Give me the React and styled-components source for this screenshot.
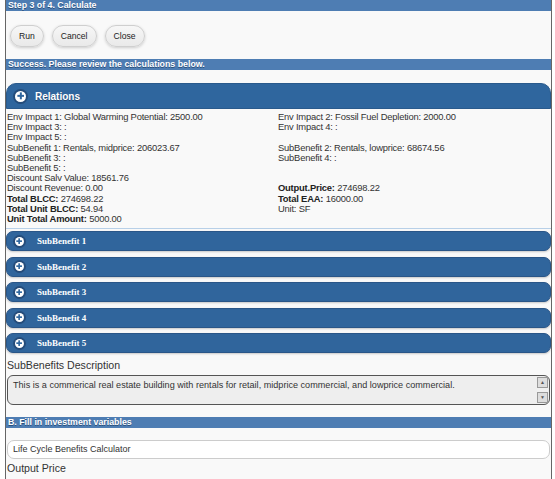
import React from "react";
import styled, { createGlobalStyle } from "styled-components";

const Global = createGlobalStyle`
  *, *::before, *::after { box-sizing: border-box; }
  html, body { margin: 0; padding: 0; background: #fff; }
  body { font-family: "Liberation Sans", Arial, sans-serif; }
`;

const Page = styled.div`
  margin-left: 5px;
  width: 547px;
  height: 479px;
  overflow: hidden;
  border-left: 1px solid #666;
  border-right: 1px solid #666;
  background: #f9f9f9;
  color: #333;
`;

const Bar = styled.div`
  height: 11px;
  line-height: 11px;
  background: #4e7db3;
  color: #fff;
  font-weight: bold;
  font-size: 8.8px;
  padding-left: 2px;
  text-shadow: 0 1px 0 #2a4f7a;
  margin-top: ${p => p.$mt || 0}px;
  white-space: nowrap;
`;

const ButtonRow = styled.div`
  display: flex;
  gap: 8px;
  padding: 14px 0 0 4px;
`;

const Btn = styled.button`
  height: 22px;
  padding: 0 8px;
  border-radius: 11px;
  border: 1px solid #cfcfcf;
  background: linear-gradient(#f7f7f7, #e9e9e9);
  box-shadow: 0 1px 3px rgba(0,0,0,0.18);
  font-family: "Liberation Sans", Arial, sans-serif;
  font-size: 8.6px;
  color: #222;
`;

const RelHeader = styled.div`
  margin-top: 13px;
  height: 26px;
  background: #2f669e;
  border-radius: 10px 10px 0 0;
  border: 1px solid #2a5a8c;
  display: flex;
  align-items: center;
  padding-left: 8px;
  gap: 9px;
  color: #fff;
  font-weight: bold;
  font-size: 10px;
  text-shadow: 0 1px 0 #1e4570;
`;

const Plus = styled.span`
  width: ${p => p.$s}px;
  height: ${p => p.$s}px;
  border-radius: 50%;
  background: #fff;
  box-shadow: 0 0 0 2px rgba(30,60,100,0.6);
  display: inline-flex;
  align-items: center;
  justify-content: center;
  flex: none;
`;

const PlusIcon = ({ s }) => (
  <Plus $s={s}>
    <svg width={s * 0.7} height={s * 0.7} viewBox="0 0 10 10">
      <rect x="3.7" y="0.5" width="2.6" height="9" fill="#2f669e" />
      <rect x="0.5" y="3.7" width="9" height="2.6" fill="#2f669e" />
    </svg>
  </Plus>
);

const RelBody = styled.div`
  display: grid;
  grid-template-columns: 271px 1fr;
  padding: 3px 1px 4px;
  border-bottom: 1px solid #b8d0e8;
  font-size: 9.4px;
  letter-spacing: -0.2px;
  line-height: 10.2px;
  color: #333;
`;

const Col = styled.div`
  display: flex;
  flex-direction: column;
`;

const Line = styled.div`
  height: 10.2px;
  white-space: nowrap;
`;

const B = styled.b`
  color: #222;
`;

const SubList = styled.div`
  display: flex;
  flex-direction: column;
  gap: 5.5px;
  padding-top: 2px;
`;

const SubBar = styled.div`
  height: 20px;
  background: #30659c;
  border: 1px solid #2a5688;
  border-radius: 7px;
  display: flex;
  align-items: center;
  padding-left: 8px;
  gap: 13px;
  color: #fff;
  font-family: "Liberation Serif", "Times New Roman", serif;
  font-weight: bold;
  font-size: 9px;
  box-shadow: 0 1px 2px rgba(0,0,0,0.2);
`;

const Label = styled.div`
  font-size: 10.6px;
  line-height: 12px;
  color: #333;
  padding: ${p => p.$pt}px 0 0 1px;
  height: ${p => p.$h}px;
`;

const TextArea = styled.div`
  position: relative;
  height: 30px;
  margin: 0 1px;
  border: 1px solid #555;
  border-radius: 6px;
  background: #eeeeee;
  font-size: 9.1px;
  line-height: 11px;
  padding: 4px 0 0 5px;
  color: #333;
  white-space: nowrap;
`;

const Scroll = styled.div`
  position: absolute;
  right: 1px;
  top: 1px;
  bottom: 1px;
  width: 11px;
  display: flex;
  flex-direction: column;
  justify-content: space-between;
  background: #f0f0f0;
`;

const Arrow = styled.div`
  height: 11px;
  background: #ddd;
  border: 1px solid #999;
  display: flex;
  align-items: center;
  justify-content: center;
  font-size: 5px;
  color: #555;
`;

const Input = styled.div`
  margin: 12px 1px 0 1px;
  height: 19px;
  border: 1px solid #ccc;
  border-radius: 7px;
  background: #fff;
  font-size: 9px;
  line-height: 17px;
  padding-left: 5px;
  color: #333;
`;

export default function App() {
  const left = [
    ["Env Impact 1: Global Warming Potential: 2500.00"],
    ["Env Impact 3: :"],
    ["Env Impact 5: :"],
    ["SubBenefit 1: Rentals, midprice: 206023.67"],
    ["SubBenefit 3: :"],
    ["SubBenefit 5: :"],
    ["Discount Salv Value: 18561.76"],
    ["Discount Revenue: 0.00"],
    ["274698.22", "Total BLCC:"],
    ["54.94", "Total Unit BLCC:"],
    ["5000.00", "Unit Total Amount:"],
  ];
  const right = [
    ["Env Impact 2: Fossil Fuel Depletion: 2000.00"],
    ["Env Impact 4: :"],
    [""],
    ["SubBenefit 2: Rentals, lowprice: 68674.56"],
    ["SubBenefit 4: :"],
    [""],
    [""],
    ["274698.22", "Output.Price:"],
    ["16000.00", "Total EAA:"],
    ["Unit: SF"],
  ];
  const render = rows =>
    rows.map(([t, b], i) => (
      <Line key={i}>
        {b ? (<><B>{b}</B> {t}</>) : t}
      </Line>
    ));
  return (
    <>
      <Global />
      <Page>
        <Bar>Step 3 of 4. Calculate</Bar>
        <ButtonRow>
          <Btn>Run</Btn>
          <Btn>Cancel</Btn>
          <Btn>Close</Btn>
        </ButtonRow>
        <Bar $mt={12}>Success. Please review the calculations below.</Bar>
        <RelHeader>
          <PlusIcon s={11} />
          Relations
        </RelHeader>
        <RelBody>
          <Col>{render(left)}</Col>
          <Col>{render(right)}</Col>
        </RelBody>
        <SubList>
          {[1, 2, 3, 4, 5].map(n => (
            <SubBar key={n}>
              <PlusIcon s={9} />
              SubBenefit {n}
            </SubBar>
          ))}
        </SubList>
        <Label $pt={6} $h={22}>SubBenefits Description</Label>
        <TextArea>
          This is a commerical real estate building with rentals for retail, midprice commercial, and lowprice commercial.
          <Scroll>
            <Arrow>▲</Arrow>
            <Arrow>▼</Arrow>
          </Scroll>
        </TextArea>
        <Bar $mt={12}>B. Fill in investment variables</Bar>
        <Input>Life Cycle Benefits Calculator</Input>
        <Label $pt={3} $h={16}>Output Price</Label>
      </Page>
    </>
  );
}
